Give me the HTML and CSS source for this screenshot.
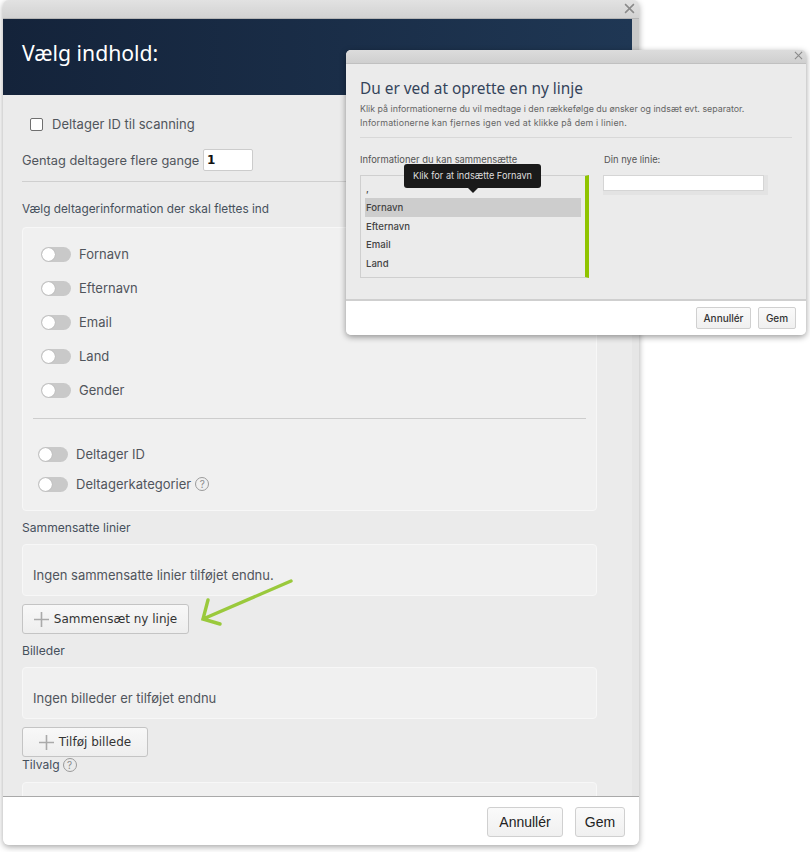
FILE: index.html
```html
<!DOCTYPE html>
<html lang="da">
<head>
<meta charset="utf-8">
<title>Vælg indhold</title>
<link rel="stylesheet" href="styles.css">
</head>
<body>
<div class="modal">
  <div class="titlebar">
    <svg class="close close-main" viewBox="0 0 10 10"><path d="M1 1l8 8M9 1l-8 8"/></svg>
  </div>
  <header class="hero"><h1>Vælg indhold:</h1></header>
  <main class="content">
    <label class="check-row"><span class="checkbox"></span>Deltager ID til scanning</label>
    <div class="repeat-row"><span class="repeat-text">Gentag deltagere flere gange</span><span class="num-input">1</span></div>
    <hr class="rule">
    <div class="label first-label">Vælg deltagerinformation der skal flettes ind</div>
    <section class="card fields">
      <div class="group group-a">
        <div class="toggle-row"><span class="toggle"></span>Fornavn</div>
        <div class="toggle-row"><span class="toggle"></span>Efternavn</div>
        <div class="toggle-row"><span class="toggle"></span>Email</div>
        <div class="toggle-row"><span class="toggle"></span>Land</div>
        <div class="toggle-row"><span class="toggle"></span>Gender</div>
      </div>
      <hr class="card-rule">
      <div class="group group-b">
        <div class="toggle-row tall"><span class="toggle"></span>Deltager ID</div>
        <div class="toggle-row tall"><span class="toggle"></span>Deltagerkategorier <span class="help">?</span></div>
      </div>
    </section>
    <div class="label section-label">Sammensatte linier</div>
    <section class="card empty">Ingen sammensatte linier tilføjet endnu.</section>
    <button class="add-btn btn-lines"><svg class="plus" viewBox="0 0 15 15"><path d="M7.5 0v15M0 7.5h15"/></svg>Sammensæt ny linje</button>
    <div class="label section-label">Billeder</div>
    <section class="card empty">Ingen billeder er tilføjet endnu</section>
    <button class="add-btn btn-image"><svg class="plus" viewBox="0 0 15 15"><path d="M7.5 0v15M0 7.5h15"/></svg>Tilføj billede</button>
    <div class="label options-label">Tilvalg <span class="help">?</span></div>
    <section class="card options"></section>
  </main>
  <footer class="foot">
    <button class="foot-btn btn-cancel">Annullér</button>
    <button class="foot-btn btn-save">Gem</button>
  </footer>
</div>

<svg class="arrow" viewBox="0 0 100 50"><path d="M92 2L4 40M9 21L4 40L21 45"/></svg>

<div class="dialog">
  <div class="dialog-bar">
    <svg class="close close-dialog" viewBox="0 0 10 10"><path d="M1 1l8 8M9 1l-8 8"/></svg>
  </div>
  <div class="dialog-body">
    <h2>Du er ved at oprette en ny linje</h2>
    <p>Klik på informationerne du vil medtage i den rækkefølge du ønsker og indsæt evt. separator.<br><span class="second-line">Informationerne kan fjernes igen ved at klikke på dem i linien.</span></p>
    <hr class="dialog-rule">
    <div class="columns">
      <div class="col-left">
        <div class="col-label">Informationer du kan sammensætte</div>
        <ul class="picker">
          <li>,</li>
          <li class="active">Fornavn</li>
          <li>Efternavn</li>
          <li>Email</li>
          <li>Land</li>
        </ul>
      </div>
      <div class="col-right">
        <div class="col-label">Din nye linie:</div>
        <div class="line-input"><span></span></div>
      </div>
    </div>
  </div>
  <div class="dialog-foot">
    <button class="small-btn small-cancel">Annullér</button>
    <button class="small-btn small-save">Gem</button>
  </div>
  <div class="tooltip">Klik for at indsætte Fornavn</div>
</div>
</body>
</html>
```
FILE: styles.css
```css
* { box-sizing: border-box; }
html, body { margin: 0; padding: 0; background: #fff; }
body {
  width: 810px;
  height: 852px;
  overflow: hidden;
  position: relative;
  font-family: "Inter", "Liberation Sans", sans-serif;
  color: #50555c;
  font-size: 12.5px;
}
hr { border: 0; margin: 0; }
button { font-family: "Liberation Sans", sans-serif; padding: 0; cursor: pointer; }

.modal {
  margin-left: 3px;
  width: 636px;
  height: 845px;
  display: flex;
  flex-direction: column;
  border-radius: 6px;
  overflow: hidden;
  background: #ebebeb;
  box-shadow: 0 2px 6px rgba(0,0,0,.35);
}
.titlebar {
  height: 19px;
  flex: none;
  position: relative;
  background: linear-gradient(#e2e2e2, #d2d2d2);
  border-bottom: 1px solid #b5b5b5;
}
.close { position: absolute; fill: none; stroke: #8a8a8a; stroke-width: 1.4; }
.close-main { right: 4px; top: 3px; width: 11px; height: 11px; }
.hero {
  height: 76px;
  flex: none;
  display: flex;
  align-items: center;
  padding: 0 19px 9px;
  background: linear-gradient(90deg, #14233a, #1f3754);
  background-clip: padding-box;
  border-right: 7px solid #c9c9c9;
}
.hero h1 {
  margin: 0;
  color: #fff;
  font-family: "Noto Sans", sans-serif;
  font-weight: 400;
  font-size: 21.2px;
}
.content {
  flex: 1;
  min-height: 0;
  overflow: hidden;
  padding: 19px 35px 0 19px;
  border-right: 7px solid #e6e6e6;
  display: flex;
  flex-direction: column;
  align-items: stretch;
}
.content > * { flex: none; }
.check-row {
  height: 20px;
  margin-left: 8px;
  display: flex;
  align-items: center;
  gap: 9px;
  font-size: 13px;
}
.checkbox {
  width: 13px;
  height: 13px;
  border: 1px solid #6f6f6f;
  border-radius: 2px;
  background: #fff;
}
.repeat-row {
  margin-top: 15px;
  height: 22px;
  display: flex;
  align-items: center;
  gap: 4px;
}
.repeat-text { width: 177px; font-size: 12.8px; white-space: nowrap; }
.num-input {
  width: 50px;
  height: 22px;
  border: 1px solid #ccc;
  border-radius: 2px;
  background: #fff;
  color: #111;
  padding-left: 3px;
  font: 700 12px/20px "DejaVu Sans", sans-serif;
}
.rule { height: 1px; margin-top: 10px; margin-right: -35px; background: #cfcfcf; }
.label {
  height: 18px;
  padding-top: 1px;
  line-height: 17px;
  font-size: 11.8px;
  display: flex;
  align-items: center;
  gap: 3px;
  color: #46505c;
}
.first-label { margin-top: 18px; }
.section-label { margin-top: 7px; font-size: 12.1px; }
.options-label { margin-top: -2px; font-size: 12.1px; }
.card {
  margin-top: 9px;
  background: #f0f0f0;
  border: 1px solid #f7f7f7;
  border-radius: 4px;
}
.fields { height: 284px; padding-top: 9px; }
.group-a { padding-left: 18px; }
.group-b { padding-left: 15px; margin-top: 20px; }
.toggle-row { height: 34px; display: flex; align-items: center; gap: 8px; font-size: 13px; }
.toggle-row.tall { height: 30px; }
.toggle {
  position: relative;
  width: 30px;
  height: 15px;
  border-radius: 8px;
  background: #c9c9c9;
}
.toggle::after {
  content: "";
  position: absolute;
  left: 1px;
  top: 1px;
  width: 13px;
  height: 13px;
  border-radius: 50%;
  background: #fff;
  box-shadow: 0 0 1px rgba(0,0,0,.3);
}
.card-rule { height: 1px; margin: 11px 10px 0; background: #cdcdcd; }
.help {
  width: 14px;
  height: 14px;
  border: 1px solid #9a9a9a;
  border-radius: 50%;
  color: #8c8c8c;
  font-size: 10px;
  line-height: 12px;
  text-align: center;
  display: inline-block;
  flex: none;
  margin-left: -4px;
}
.label .help { margin-left: 0; }
.empty { height: 52px; padding: 21px 10px 0; line-height: 18px; font-size: 13px; margin-top: 8px; }
.add-btn {
  margin-top: 8px;
  height: 30px;
  display: flex;
  align-items: center;
  justify-content: center;
  gap: 5px;
  align-self: flex-start;
  border: 1px solid #c4c4c4;
  border-radius: 3px;
  background: linear-gradient(#f8f8f8, #eeeeee);
  font-family: "DejaVu Sans", sans-serif;
  font-size: 12px;
  color: #333;
}
.btn-lines { width: 167px; }
.btn-image { width: 126px; }
.plus { width: 15px; height: 15px; fill: none; stroke: #aaa; stroke-width: 1.6; }
.options { height: 40px; }
.foot {
  height: 49px;
  flex: none;
  background: #fff;
  border-top: 1px solid #a9a9a9;
  display: flex;
  justify-content: flex-end;
  gap: 12px;
  padding: 10px 14px 0 0;
}
.foot-btn {
  height: 30px;
  border: 1px solid #d0d0d0;
  border-radius: 3px;
  background: linear-gradient(#fafafa, #f0f0f0);
  font-size: 14px;
  color: #222;
}
.btn-cancel { width: 76px; }
.btn-save { width: 50px; }

.arrow {
  position: absolute;
  left: 199px;
  top: 579px;
  width: 100px;
  height: 50px;
  fill: none;
  stroke: #9ac93c;
  stroke-width: 3.4;
  stroke-linecap: round;
  stroke-linejoin: miter;
}

.dialog {
  position: absolute;
  left: 346px;
  top: 50px;
  width: 460px;
  height: 285px;
  display: flex;
  flex-direction: column;
  border-radius: 5px;
  background: #ebebeb;
  box-shadow: 0 2px 6px rgba(0,0,0,.4);
}
.dialog-bar {
  height: 14px;
  flex: none;
  position: relative;
  border-radius: 5px 5px 0 0;
  background: linear-gradient(#dcdcdc, #cfcfcf);
  border-bottom: 1px solid #c0c0c0;
}
.close-dialog { right: 3px; top: 1px; width: 9px; height: 9px; stroke-width: 1.2; }
.dialog-body { flex: 1; padding: 15px 14px 0; min-height: 0; }
.dialog-body h2 {
  margin: 0;
  font-family: "Noto Sans", sans-serif;
  font-weight: 400;
  font-size: 15.4px;
  line-height: 20px;
  color: #34435a;
}
.dialog-body p {
  margin: 3px 0 0;
  font-size: 8.85px;
  line-height: 14px;
  color: #666;
  white-space: nowrap;
}
.second-line { letter-spacing: .17px; }
.dialog-rule { height: 1px; margin-top: 7px; background: #d8d8d8; }
.columns { display: flex; margin-top: 15px; }
.col-left { width: 229px; }
.col-right { margin-left: 15px; }
.col-label { height: 12px; padding-top: 1px; line-height: 12px; font-size: 9.4px; color: #555; }
.picker {
  list-style: none;
  margin: 10px 0 0;
  height: 103px;
  padding: 3px 4px 0 4px;
  border: 1px solid #cfcfcf;
  border-right: 4px solid #8fc400;
  font-size: 9.6px;
  font-weight: 500;
  color: #444;
}
.picker li { height: 18.8px; line-height: 19px; padding-left: 1px; }
.picker .active { background: #cdcdcd; }
.line-input {
  margin: 10px 0 0 -1px;
  width: 165px;
  height: 20px;
  background: #e3e3e3;
}
.line-input span {
  display: block;
  width: 161px;
  height: 16px;
  background: #fff;
  border: 1px solid #d5d5d5;
}
.dialog-foot {
  height: 36px;
  flex: none;
  background: #fff;
  border-top: 2px solid #cfcfcf;
  border-radius: 0 0 5px 5px;
  display: flex;
  justify-content: flex-end;
  gap: 7px;
  padding: 6px 10px 0 0;
}
.small-btn {
  height: 22px;
  border: 1px solid #d0d0d0;
  border-radius: 2px;
  background: linear-gradient(#fafafa, #f0f0f0);
  font-family: "Inter", sans-serif;
  font-size: 10px;
  font-weight: 500;
  color: #333;
}
.small-cancel { width: 55px; }
.small-save { width: 38px; }
.tooltip {
  position: absolute;
  left: 58px;
  top: 114px;
  width: 137px;
  height: 24px;
  border-radius: 3px;
  background: #1a1a1a;
  color: #ddd;
  font-size: 9.2px;
  line-height: 24px;
  text-align: center;
}
.tooltip::after {
  content: "";
  position: absolute;
  left: 64px;
  bottom: -5px;
  border: 5px solid transparent;
  border-bottom: 0;
  border-top-color: #1a1a1a;
}
```
